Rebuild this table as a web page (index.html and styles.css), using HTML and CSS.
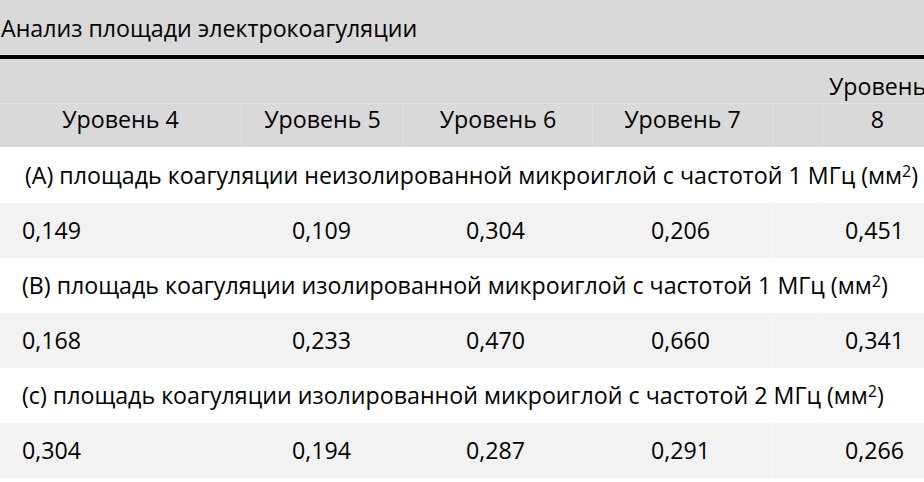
FILE: index.html
```html
<!DOCTYPE html>
<html lang="ru">
<head>
<meta charset="utf-8">
<title>Анализ площади электрокоагуляции</title>
<link rel="stylesheet" href="styles.css">
</head>
<body>
<div class="page">
  <div class="title">Анализ площади электрокоагуляции</div>
  <div class="head">
    <div class="head-top"></div>
    <div class="head-row">
      <div class="hc c1">Уровень 4</div>
      <div class="hc c2">Уровень 5</div>
      <div class="hc c3">Уровень 6</div>
      <div class="hc c4">Уровень 7</div>
      <div class="hc c5"></div>
      <div class="hc c6">Уровень 8</div>
    </div>
  </div>

  <div class="caption cap-first">(A) площадь коагуляции неизолированной микроиглой с частотой 1 МГц (мм<sup>2</sup>)</div>
  <div class="row">
    <div class="dc d1">0,149</div>
    <div class="dc d2">0,109</div>
    <div class="dc d3">0,304</div>
    <div class="dc d4">0,206</div>
    <div class="dc d5"></div>
    <div class="dc d6">0,451</div>
  </div>

  <div class="caption">(B) площадь коагуляции изолированной микроиглой с частотой 1 МГц (мм<sup>2</sup>)</div>
  <div class="row">
    <div class="dc d1">0,168</div>
    <div class="dc d2">0,233</div>
    <div class="dc d3">0,470</div>
    <div class="dc d4">0,660</div>
    <div class="dc d5"></div>
    <div class="dc d6">0,341</div>
  </div>

  <div class="caption">(c) площадь коагуляции изолированной микроиглой с частотой 2 МГц (мм<sup>2</sup>)</div>
  <div class="row">
    <div class="dc d1">0,304</div>
    <div class="dc d2">0,194</div>
    <div class="dc d3">0,287</div>
    <div class="dc d4">0,291</div>
    <div class="dc d5"></div>
    <div class="dc d6">0,266</div>
  </div>
</div>
</body>
</html>
```

FILE: styles.css
```css
* { box-sizing: border-box; }

html, body {
  margin: 0;
  padding: 0;
  background: #ffffff;
}

body {
  font-family: "Open Sans", "Noto Sans", "DejaVu Sans", sans-serif;
  font-size: 23.2px;
  color: #000000;
  overflow: hidden;
}

.page {
  width: 924px;
}

.title {
  height: 59px;
  background: #d9d9d9;
  padding: 2px 0 0 1px;
  line-height: 52px;
  border-bottom: 4px solid #000000;
  box-shadow: inset 0 -1px 0 #e4e4e4;
  white-space: nowrap;
}

.head {
  background: #d9d9d9;
  height: 88px;
  display: flex;
  flex-direction: column;
}

.head-top {
  height: 45px;
  border-bottom: 1px solid #e3e3e3;
}

.head-row {
  display: flex;
  height: 43px;
}

.hc {
  display: flex;
  flex-direction: column;
  justify-content: flex-end;
  align-items: center;
  text-align: center;
  line-height: 33px;
  padding-bottom: 11px;
  white-space: nowrap;
}

.hc + .hc { border-left: 1px solid #e3e3e3; }

.c1 { width: 241px; }
.c2 { width: 162px; }
.c3 { width: 189px; }
.c4 { width: 180px; }
.c5 { width: 50px; }
.c6 { flex: 1; white-space: normal; width: 102px; padding-left: 8px; }

.caption {
  height: 55px;
  line-height: 55px;
  padding-left: 22px;
  white-space: nowrap;
  background: #ffffff;
}

.cap-first {
  height: 56px;
  line-height: 56px;
  padding-left: 25px;
}

sup {
  font-size: 16px;
  line-height: 0;
  vertical-align: 7px;
}

.row {
  display: flex;
  height: 55px;
  line-height: 55px;
  background: #f2f2f2;
}

.dc {
  padding-left: 22px;
  white-space: nowrap;
}

.d1 { width: 270px; }
.d2 { width: 174px; }
.d3 { width: 185px; }
.d4 { width: 143px; }
.d5 { width: 50px; border-left: 1px solid #f8f8f8; }
.d6 { flex: 1; border-left: 1px solid #f8f8f8; }
```
